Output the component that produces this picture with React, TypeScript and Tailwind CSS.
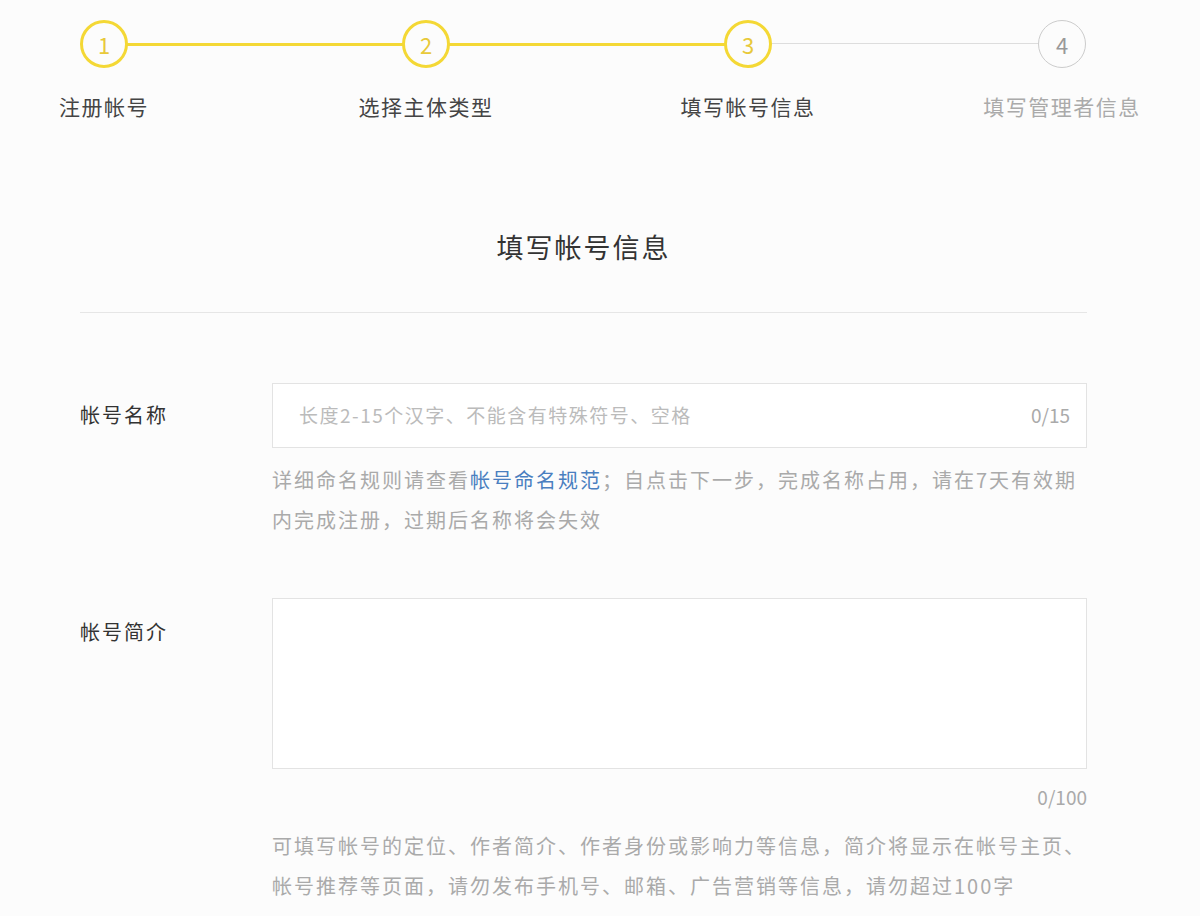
export default function App() {
  const steps = [
    { n: "1", label: "注册帐号", done: true },
    { n: "2", label: "选择主体类型", done: true },
    { n: "3", label: "填写帐号信息", done: true },
    { n: "4", label: "填写管理者信息", done: false },
  ];
  const centers = [104, 426, 748, 1062];
  return (
    <div className="w-[1200px] h-[916px] overflow-hidden bg-[#fcfcfc] text-[#333]" style={{ fontFamily: '"Noto Sans CJK SC", "Noto Sans", sans-serif' }}>
      <div className="relative h-[150px]">
        <div className="absolute top-[43px] left-[104px] w-[644px] h-[3px] bg-[#f4d835]" />
        <div className="absolute top-[43px] left-[748px] w-[314px] h-[1px] bg-[#ddd]" />
        {steps.map((s, i) => (
          <div key={i}>
            <div
              className={`absolute top-[20px] w-[48px] h-[48px] rounded-full flex items-center justify-center text-[22px] bg-[#fcfcfc] ${s.done ? "border-[3px] border-[#f4d835] text-[#e8c93a]" : "border border-[#ccc] text-[#999]"}`}
              style={{ left: centers[i] - 24 }}
            >
              {s.n}
            </div>
            <div
              className={`absolute top-[91px] w-[240px] text-center text-[21px] tracking-[1.5px] ${s.done ? "text-[#444]" : "text-[#aaa]"}`}
              style={{ left: centers[i] - 120 }}
            >
              {s.label}
            </div>
          </div>
        ))}
      </div>
      <div className="w-[1007px] ml-[80px]">
        <div className="h-[163px] border-b border-[#e6e6e6] flex items-center justify-center pt-[33px] text-[27px] tracking-[2px] text-[#333]">填写帐号信息</div>
        <div className="flex mt-[70px]">
          <div className="w-[192px] text-[20px] tracking-[2px] pt-[17px]">帐号名称</div>
          <div className="flex-1">
            <div className="h-[65px] border border-[#e3e3e3] bg-white flex items-center justify-between pl-[26px] pr-[16px] text-[19px]">
              <span className="text-[#bbb] tracking-[1.5px]">长度2-15个汉字、不能含有特殊符号、空格</span>
              <span className="text-[#aaa]">0/15</span>
            </div>
            <div className="text-[20px] tracking-[2px] leading-[40px] text-[#aaa] mt-[12px]">
              详细命名规则请查看<span className="text-[#4a7fc0]">帐号命名规范</span>；自点击下一步，完成名称占用，请在7天有效期内完成注册，过期后名称将会失效
            </div>
          </div>
        </div>
        <div className="flex mt-[58px]">
          <div className="w-[192px] text-[20px] tracking-[2px] pt-[19px]">帐号简介</div>
          <div className="flex-1">
            <div className="h-[171px] border border-[#e3e3e3] bg-white" />
            <div className="text-right text-[19px] text-[#aaa] mt-[14px]">0/100</div>
            <div className="text-[20px] tracking-[2px] leading-[40px] text-[#aaa] mt-[14px]">
              可填写帐号的定位、作者简介、作者身份或影响力等信息，简介将显示在帐号主页、帐号推荐等页面，请勿发布手机号、邮箱、广告营销等信息，请勿超过100字
            </div>
          </div>
        </div>
      </div>
    </div>
  );
}
